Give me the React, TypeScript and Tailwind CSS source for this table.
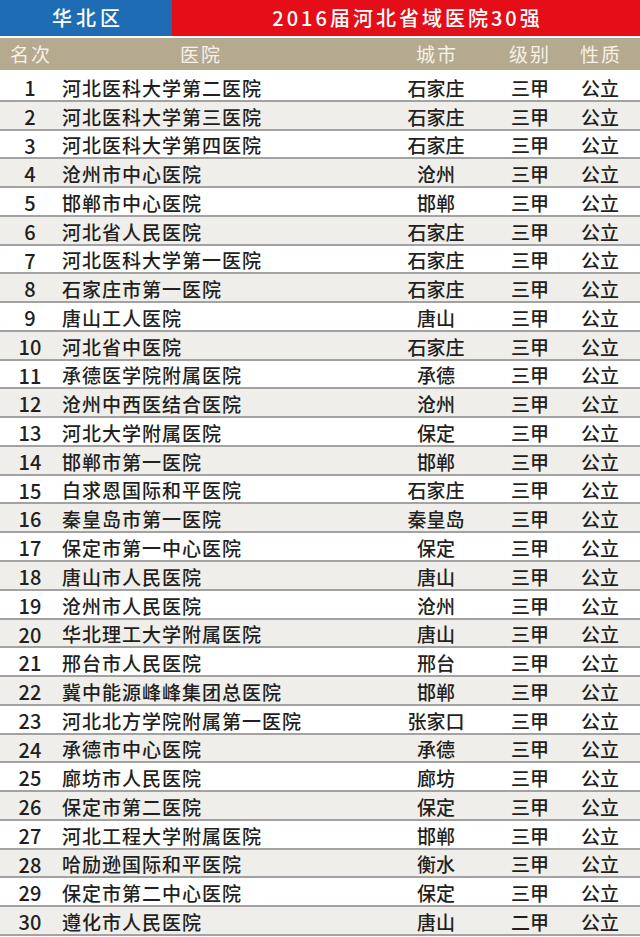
const rows: [number, string, string, string, string][] = [
  [1, "河北医科大学第二医院", "石家庄", "三甲", "公立"],
  [2, "河北医科大学第三医院", "石家庄", "三甲", "公立"],
  [3, "河北医科大学第四医院", "石家庄", "三甲", "公立"],
  [4, "沧州市中心医院", "沧州", "三甲", "公立"],
  [5, "邯郸市中心医院", "邯郸", "三甲", "公立"],
  [6, "河北省人民医院", "石家庄", "三甲", "公立"],
  [7, "河北医科大学第一医院", "石家庄", "三甲", "公立"],
  [8, "石家庄市第一医院", "石家庄", "三甲", "公立"],
  [9, "唐山工人医院", "唐山", "三甲", "公立"],
  [10, "河北省中医院", "石家庄", "三甲", "公立"],
  [11, "承德医学院附属医院", "承德", "三甲", "公立"],
  [12, "沧州中西医结合医院", "沧州", "三甲", "公立"],
  [13, "河北大学附属医院", "保定", "三甲", "公立"],
  [14, "邯郸市第一医院", "邯郸", "三甲", "公立"],
  [15, "白求恩国际和平医院", "石家庄", "三甲", "公立"],
  [16, "秦皇岛市第一医院", "秦皇岛", "三甲", "公立"],
  [17, "保定市第一中心医院", "保定", "三甲", "公立"],
  [18, "唐山市人民医院", "唐山", "三甲", "公立"],
  [19, "沧州市人民医院", "沧州", "三甲", "公立"],
  [20, "华北理工大学附属医院", "唐山", "三甲", "公立"],
  [21, "邢台市人民医院", "邢台", "三甲", "公立"],
  [22, "冀中能源峰峰集团总医院", "邯郸", "三甲", "公立"],
  [23, "河北北方学院附属第一医院", "张家口", "三甲", "公立"],
  [24, "承德市中心医院", "承德", "三甲", "公立"],
  [25, "廊坊市人民医院", "廊坊", "三甲", "公立"],
  [26, "保定市第二医院", "保定", "三甲", "公立"],
  [27, "河北工程大学附属医院", "邯郸", "三甲", "公立"],
  [28, "哈励逊国际和平医院", "衡水", "三甲", "公立"],
  [29, "保定市第二中心医院", "保定", "三甲", "公立"],
  [30, "遵化市人民医院", "唐山", "二甲", "公立"],
];

const cols = "grid grid-cols-[60px_330px_92px_94px_48px_16px] items-center";

export default function App() {
  return (
    <div
      className="w-[640px] h-[937px] overflow-hidden bg-white text-[#231f20]"
      style={{ fontFamily: '"Noto Sans CJK SC", "Noto Sans", sans-serif' }}
    >
      <div className="flex h-[36px] font-medium text-white">
        <div className="flex w-[172px] items-center justify-center bg-[#1d6cb4] pl-[4px] text-[20px] tracking-[4px]">
          华北区
        </div>
        <div className="flex flex-1 items-center justify-center bg-[#e50d18] pl-[3px] text-[20px] tracking-[3px]">
          2016届河北省域医院30强
        </div>
      </div>
      <div className={`${cols} mt-[2px] h-[32px] bg-[#b5a990] text-[19px] text-[#f6f1e7] tracking-[2px]`}>
        <div className="pl-[2px] text-center">名次</div>
        <div className="pl-[120px]">医院</div>
        <div className="pl-[2px] text-center">城市</div>
        <div className="pl-[2px] text-center">级别</div>
        <div className="pl-[2px] text-center">性质</div>
        <div />
      </div>
      <div className="mt-[3px]">
        {rows.map(([n, name, city, level, kind]) => (
          <div
            key={n}
            className={`${cols} h-[28.77px] border-b-2 border-[#a2a2a2] text-[19px] font-medium ${
              n % 2 === 0 ? "bg-[#efeeeb]" : "bg-white"
            }`}
          >
            <div className="text-center text-[20px]">{n}</div>
            <div className="pl-[2px] tracking-[1px]">{name}</div>
            <div className="text-center">{city}</div>
            <div className="pl-[2px] text-center">{level}</div>
            <div className="text-center">{kind}</div>
            <div />
          </div>
        ))}
      </div>
    </div>
  );
}
